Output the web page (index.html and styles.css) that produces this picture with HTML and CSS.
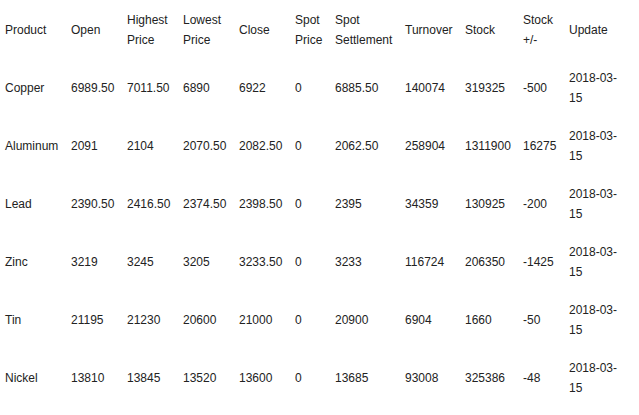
FILE: index.html
```html
<!DOCTYPE html>
<html>
<head>
<meta charset="utf-8">
<link rel="stylesheet" href="styles.css">
</head>
<body>
<table class="prices">
  <colgroup>
    <col class="c-product"><col class="c-56"><col class="c-56"><col class="c-56"><col class="c-56"><col class="c-spot"><col class="c-settle"><col class="c-turn"><col class="c-stock"><col class="c-delta"><col class="c-update">
  </colgroup>
  <thead>
    <tr><th>Product</th><th>Open</th><th>Highest Price</th><th>Lowest Price</th><th>Close</th><th>Spot Price</th><th>Spot Settlement</th><th>Turnover</th><th>Stock</th><th>Stock +/-</th><th>Update</th></tr>
  </thead>
  <tbody>
    <tr><td>Copper</td><td>6989.50</td><td>7011.50</td><td>6890</td><td>6922</td><td>0</td><td>6885.50</td><td>140074</td><td>319325</td><td>-500</td><td>2018-03-15</td></tr>
    <tr><td>Aluminum</td><td>2091</td><td>2104</td><td>2070.50</td><td>2082.50</td><td>0</td><td>2062.50</td><td>258904</td><td>1311900</td><td>16275</td><td>2018-03-15</td></tr>
    <tr><td>Lead</td><td>2390.50</td><td>2416.50</td><td>2374.50</td><td>2398.50</td><td>0</td><td>2395</td><td>34359</td><td>130925</td><td>-200</td><td>2018-03-15</td></tr>
    <tr><td>Zinc</td><td>3219</td><td>3245</td><td>3205</td><td>3233.50</td><td>0</td><td>3233</td><td>116724</td><td>206350</td><td>-1425</td><td>2018-03-15</td></tr>
    <tr><td>Tin</td><td>21195</td><td>21230</td><td>20600</td><td>21000</td><td>0</td><td>20900</td><td>6904</td><td>1660</td><td>-50</td><td>2018-03-15</td></tr>
    <tr><td>Nickel</td><td>13810</td><td>13845</td><td>13520</td><td>13600</td><td>0</td><td>13685</td><td>93008</td><td>325386</td><td>-48</td><td>2018-03-15</td></tr>
  </tbody>
</table>
</body>
</html>
```
FILE: styles.css
```css
html, body {
  margin: 0;
  padding: 0;
  background: #fff;
}
body {
  font-family: "Liberation Sans", Arial, sans-serif;
  font-size: 12px;
  color: #222;
  padding-top: 1px;
}
.prices {
  table-layout: fixed;
  width: 624px;
  border-collapse: collapse;
  border-spacing: 0;
}
.prices th,
.prices td {
  padding: 9px 5px;
  line-height: 20px;
  text-align: left;
  vertical-align: middle;
  font-weight: normal;
  height: 40px;
  box-sizing: content-box;
}
.c-product { width: 66px; }
.c-56 { width: 56px; }
.c-spot { width: 40px; }
.c-settle { width: 70px; }
.c-turn { width: 60px; }
.c-stock { width: 58px; }
.c-delta { width: 46px; }
.c-update { width: 60px; }
```
